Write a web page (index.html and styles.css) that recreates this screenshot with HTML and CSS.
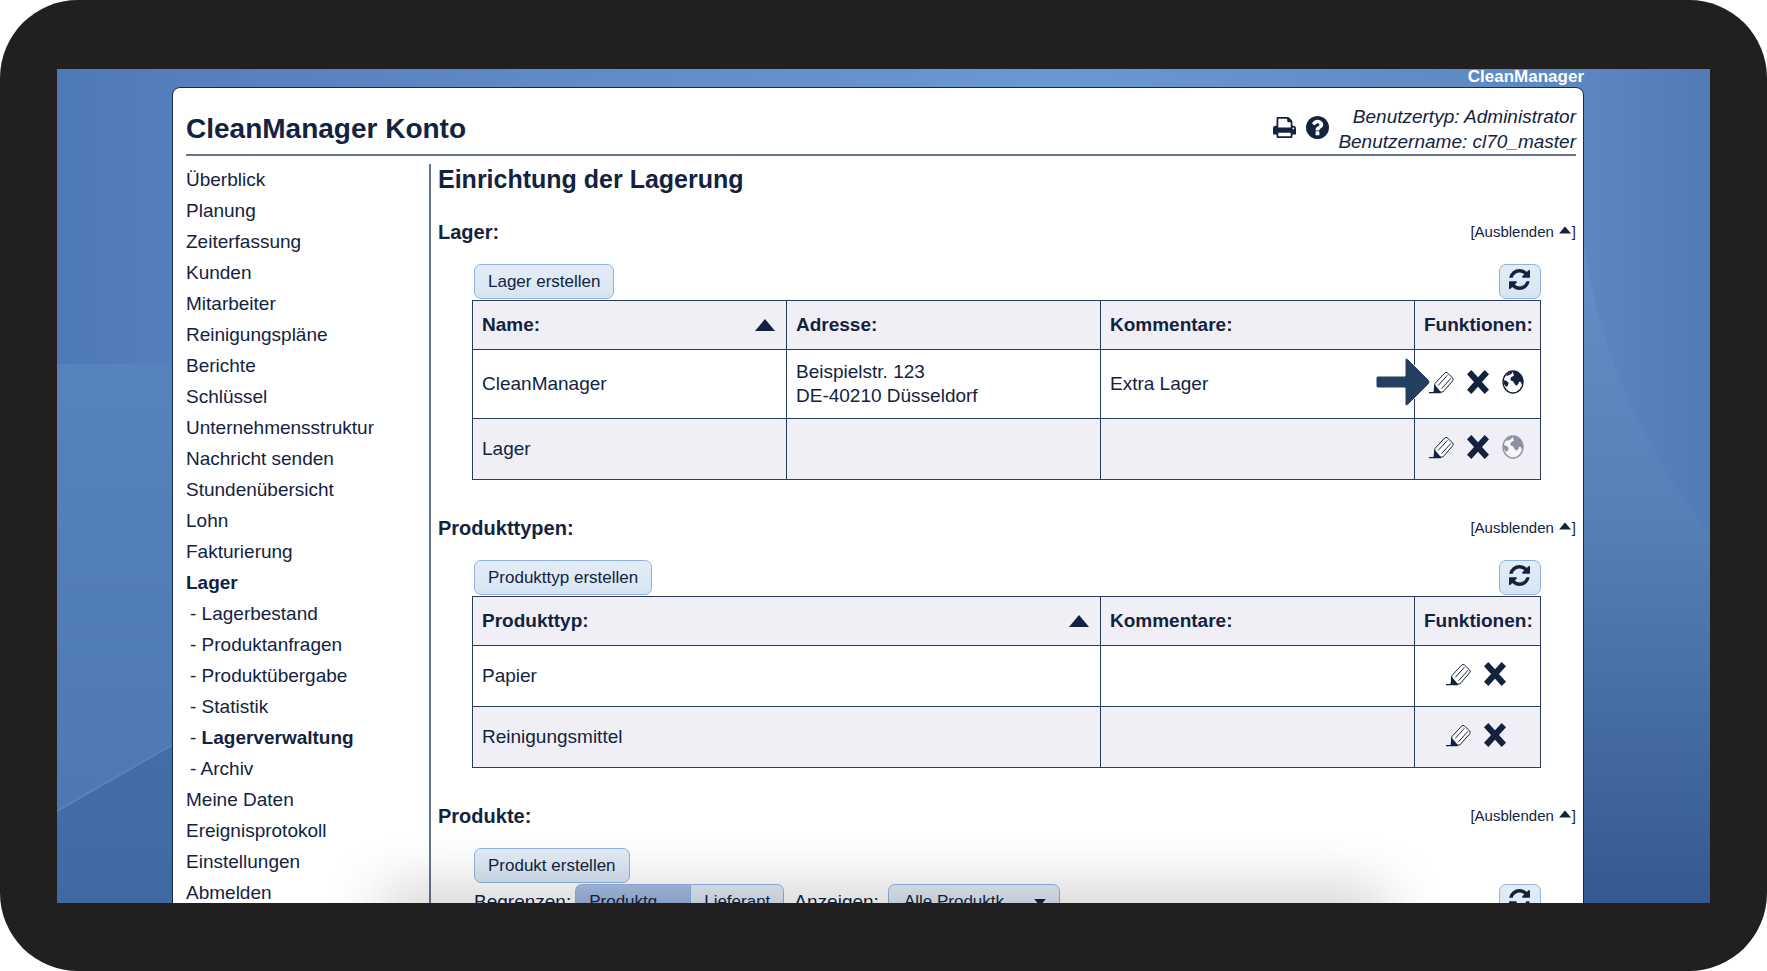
FILE: index.html
```
<!DOCTYPE html>
<html lang="de">
<head>
    <meta charset="UTF-8">
    <meta name="viewport" content="width=device-width, initial-scale=1.0">
    <title>CleanManager Konto</title>
    <link rel="stylesheet" href="styles.css">
</head>
<body>
    <!-- Symbole -->
    <svg class="symbols" aria-hidden="true">
        <symbol id="print" viewBox="64 128 1664 1536">
            <path d="M448 1536h896v-256h-896v256zM448 896h896v-384h-160q-40 0-68-28t-28-68v-160h-640v640zM1600 960q0-26-19-45t-45-19-45 19-19 45 19 45 45 19 45-19 19-45zM1728 960v416q0 13-9.500 22.500t-22.500 9.500h-224v160q0 40-28 68t-68 28h-960q-40 0-68-28t-28-68v-160h-224q-13 0-22.500-9.500t-9.500-22.500v-416q0-79 56.500-135.500t135.500-56.500h64v-544q0-40 28-68t68-28h672q40 0 88 20t76 48l152 152q28 28 48 76t20 88v256h64q79 0 135.500 56.500t56.500 135.500z"/>
        </symbol>
        <symbol id="help" viewBox="128 128 1536 1536">
            <path d="M1024 1376v-192q0-14-9-23t-23-9h-192q-14 0-23 9t-9 23v192q0 14 9 23t23 9h192q14 0 23-9t9-23zM1280 704q0-88-55.500-163t-138.500-116-170-41q-243 0-371 213-15 24 8 42l132 100q7 6 19 6 16 0 25-12 53-68 86-92 34-24 86-24 48 0 85.500 26t37.500 59q0 38-20 61t-68 45q-63 28-115.500 86.500t-52.500 125.500v36q0 14 9 23t23 9h192q14 0 23-9t9-23q0-19 21.500-49.500t54.500-49.500q32-18 49-28.500t46-35 44.500-48 28-60.500 12.500-81zM1664 896q0 209-103 385.500t-279.500 279.500-385.500 103-385.500-103-279.500-279.500-103-385.500 103-385.500 279.500-279.500 385.500-103 385.500 103 279.500 279.500 103 385.500z"/>
        </symbol>
        <symbol id="refresh" viewBox="128 128 1536 1536">
            <path d="M1639 1056q0 5-1 7-64 268-268 434.500t-478 166.500q-146 0-282.500-55t-243.500-157l-129 129q-19 19-45 19t-45-19-19-45v-448q0-26 19-45t45-19h448q26 0 45 19t19 45-19 45l-137 137q71 66 161 102t187 36q134 0 250-65t186-179q11-17 53-117 8-23 30-23h192q13 0 22.500 9.500t9.500 22.500zM1664 256v448q0 26-19 45t-45 19h-448q-26 0-45-19t-19-45 19-45l138-138q-148-137-349-137-134 0-250 65t-186 179q-11 17-53 117-8 23-30 23h-199q-13 0-22.500-9.500t-9.500-22.500v-7q65-268 270-434.500t480-166.500q146 0 284 55.500t245 156.500l130-129q19-19 45-19t45 19 19 45z"/>
        </symbol>
        <symbol id="edit" viewBox="0 0 76 70">
            <path d="M18 38L48 6Q52 2 56 6L72 21Q75 25 72 30L42 64H16Z" fill="#fff" stroke="currentColor" stroke-width="3"/>
            <path d="M28 44L56 13M38 54L67 22" fill="none" stroke="currentColor" stroke-width="3"/>
            <path d="M16 40L36 64V68H0V64H14Z"/>
        </symbol>
        <symbol id="delete" viewBox="0 0 66 72">
            <path d="M13 0L33 22L53 0L66 13L45 36L66 59L53 72L33 50L13 72L0 59L21 36L0 13Z"/>
        </symbol>
        <symbol id="globe" viewBox="0 0 66 72">
            <ellipse cx="33" cy="36" rx="30" ry="33" fill="#fff" stroke="currentColor" stroke-width="4"/>
            <path d="M3 30L13 32L20 39L17 48L12 50Q4 42 3 30ZM13 15Q20 6 32 4L30 10L22 15L14 18ZM32 6Q50 2 60 20L64 34L60 44L56 36L51 35L49 42L43 47L38 42L33 34L25 31L27 22L36 17Z"/>
        </symbol>
        <symbol id="triangle" viewBox="0 0 20 12">
            <path d="M10 0L20 12H0Z"/>
        </symbol>
    </svg>

    <div class="device">
        <div class="screen">
            <svg class="backdrop" viewBox="0 0 1653 834" preserveAspectRatio="none" aria-hidden="true">
                <defs>
                    <linearGradient id="sky">
                        <stop offset="0" stop-color="#4d79b6"/>
                        <stop offset=".07" stop-color="#557fbc"/>
                        <stop offset=".6" stop-color="#6a98d2"/>
                        <stop offset=".92" stop-color="#5c87c1"/>
                        <stop offset="1" stop-color="#517bb5"/>
                    </linearGradient>
                    <linearGradient id="leftGlow" x2="0" y2="1">
                        <stop offset="0" stop-color="#5683bb"/>
                        <stop offset="1" stop-color="#4c76b1"/>
                    </linearGradient>
                    <linearGradient id="leftFloor" x2="0" y2="1">
                        <stop offset="0" stop-color="#4670ae"/>
                        <stop offset="1" stop-color="#4069a4"/>
                    </linearGradient>
                    <linearGradient id="rightGlow" x2="0" y2="1">
                        <stop offset="0" stop-color="#648fc6"/>
                        <stop offset=".4" stop-color="#5680b8"/>
                        <stop offset=".65" stop-color="#4870a9"/>
                        <stop offset="1" stop-color="#34598f"/>
                    </linearGradient>
                </defs>
                <rect width="1653" height="834" fill="url(#sky)"/>
                <rect y="295" width="300" height="539" fill="url(#leftGlow)"/>
                <path d="M0 742L300 570V834H0Z" fill="url(#leftFloor)"/>
                <path d="M0 742L300 570" stroke="#5883bd" stroke-width="2"/>
                <path d="M1400 180H1528Q1548 330 1653 465V834H1400Z" fill="url(#rightGlow)"/>
            </svg>

            <div class="page">
                <div class="brand">CleanManager</div>
                <div class="panel">
                    <header class="header">
                        <h1>CleanManager Konto</h1>
                        <div class="tools">
                            <a href="#" aria-label="Drucken"><svg class="icon-tool"><use href="#print"/></svg></a>
                            <a href="#" aria-label="Hilfe"><svg class="icon-tool"><use href="#help"/></svg></a>
                        </div>
                        <div class="user">Benutzertyp: Administrator<br>Benutzername: cl70_master</div>
                    </header>

                    <div class="body">
                        <nav class="menu">
                            <a href="#">Überblick</a>
                            <a href="#">Planung</a>
                            <a href="#">Zeiterfassung</a>
                            <a href="#">Kunden</a>
                            <a href="#">Mitarbeiter</a>
                            <a href="#">Reinigungspläne</a>
                            <a href="#">Berichte</a>
                            <a href="#">Schlüssel</a>
                            <a href="#">Unternehmensstruktur</a>
                            <a href="#">Nachricht senden</a>
                            <a href="#">Stundenübersicht</a>
                            <a href="#">Lohn</a>
                            <a href="#">Fakturierung</a>
                            <a href="#" class="active">Lager</a>
                            <div class="submenu">
                                <div>- <a href="#">Lagerbestand</a></div>
                                <div>- <a href="#">Produktanfragen</a></div>
                                <div>- <a href="#">Produktübergabe</a></div>
                                <div>- <a href="#">Statistik</a></div>
                                <div>- <a href="#" class="active">Lagerverwaltung</a></div>
                                <div>- <a href="#">Archiv</a></div>
                            </div>
                            <a href="#">Meine Daten</a>
                            <a href="#">Ereignisprotokoll</a>
                            <a href="#">Einstellungen</a>
                            <a href="#">Abmelden</a>
                        </nav>

                        <main class="content">
                            <h2>Einrichtung der Lagerung</h2>

                            <section class="section">
                                <div class="section-head">
                                    <h3>Lager:</h3>
                                    <a href="#" class="toggle">[Ausblenden <svg class="icon-up"><use href="#triangle"/></svg>]</a>
                                </div>
                                <div class="section-body">
                                    <div class="toolbar">
                                        <button type="button" class="btn">Lager erstellen</button>
                                        <button type="button" class="btn refresh" aria-label="Aktualisieren"><svg class="icon-refresh"><use href="#refresh"/></svg></button>
                                    </div>
                                    <table>
                                        <thead>
                                            <tr>
                                                <th class="col"><div class="sort">Name: <svg class="icon-sort"><use href="#triangle"/></svg></div></th>
                                                <th class="col">Adresse:</th>
                                                <th>Kommentare:</th>
                                                <th class="col-functions">Funktionen:</th>
                                            </tr>
                                        </thead>
                                        <tbody>
                                            <tr class="tall">
                                                <td>CleanManager</td>
                                                <td>Beispielstr. 123<br>DE-40210 Düsseldorf</td>
                                                <td>Extra Lager</td>
                                                <td class="marked">
                                                    <div class="functions">
                                                        <a href="#" aria-label="Bearbeiten"><svg class="icon-edit"><use href="#edit"/></svg></a>
                                                        <a href="#" aria-label="Löschen"><svg class="icon"><use href="#delete"/></svg></a>
                                                        <a href="#" aria-label="Karte"><svg class="icon"><use href="#globe"/></svg></a>
                                                    </div>
                                                    <svg class="pointer" viewBox="0 0 58 52" aria-hidden="true">
                                                        <path d="M4 20H31V4Q31 1 34 3L55 24Q57 26 55 28L34 49Q31 51 31 48V32H4Q2 32 2 30V22Q2 20 4 20Z" fill="#243f61" stroke="#fff" stroke-width="1"/>
                                                    </svg>
                                                </td>
                                            </tr>
                                            <tr>
                                                <td>Lager</td>
                                                <td></td>
                                                <td></td>
                                                <td>
                                                    <div class="functions">
                                                        <a href="#" aria-label="Bearbeiten"><svg class="icon-edit"><use href="#edit"/></svg></a>
                                                        <a href="#" aria-label="Löschen"><svg class="icon"><use href="#delete"/></svg></a>
                                                        <a href="#" aria-label="Karte" class="disabled"><svg class="icon"><use href="#globe"/></svg></a>
                                                    </div>
                                                </td>
                                            </tr>
                                        </tbody>
                                    </table>
                                </div>
                            </section>

                            <section class="section">
                                <div class="section-head">
                                    <h3>Produkttypen:</h3>
                                    <a href="#" class="toggle">[Ausblenden <svg class="icon-up"><use href="#triangle"/></svg>]</a>
                                </div>
                                <div class="section-body">
                                    <div class="toolbar">
                                        <button type="button" class="btn">Produkttyp erstellen</button>
                                        <button type="button" class="btn refresh" aria-label="Aktualisieren"><svg class="icon-refresh"><use href="#refresh"/></svg></button>
                                    </div>
                                    <table>
                                        <thead>
                                            <tr>
                                                <th><div class="sort">Produkttyp: <svg class="icon-sort"><use href="#triangle"/></svg></div></th>
                                                <th class="col">Kommentare:</th>
                                                <th class="col-functions">Funktionen:</th>
                                            </tr>
                                        </thead>
                                        <tbody>
                                            <tr>
                                                <td>Papier</td>
                                                <td></td>
                                                <td>
                                                    <div class="functions">
                                                        <a href="#" aria-label="Bearbeiten"><svg class="icon-edit"><use href="#edit"/></svg></a>
                                                        <a href="#" aria-label="Löschen"><svg class="icon"><use href="#delete"/></svg></a>
                                                    </div>
                                                </td>
                                            </tr>
                                            <tr>
                                                <td>Reinigungsmittel</td>
                                                <td></td>
                                                <td>
                                                    <div class="functions">
                                                        <a href="#" aria-label="Bearbeiten"><svg class="icon-edit"><use href="#edit"/></svg></a>
                                                        <a href="#" aria-label="Löschen"><svg class="icon"><use href="#delete"/></svg></a>
                                                    </div>
                                                </td>
                                            </tr>
                                        </tbody>
                                    </table>
                                </div>
                            </section>

                            <section class="section">
                                <div class="section-head">
                                    <h3>Produkte:</h3>
                                    <a href="#" class="toggle">[Ausblenden <svg class="icon-up"><use href="#triangle"/></svg>]</a>
                                </div>
                                <div class="section-body">
                                    <div class="toolbar">
                                        <button type="button" class="btn">Produkt erstellen</button>
                                    </div>
                                    <div class="toolbar">
                                        <div class="filters">
                                            <span>Begrenzen:</span>
                                            <div class="tabs">
                                                <button type="button" class="btn selected">Produktg</button>
                                                <button type="button" class="btn">Lieferant</button>
                                            </div>
                                            <label for="show">Anzeigen:</label>
                                            <div class="dropdown">
                                                <select id="show" class="btn">
                                                    <option>Alle Produktk</option>
                                                </select>
                                                <svg class="icon-down"><use href="#triangle"/></svg>
                                            </div>
                                        </div>
                                        <button type="button" class="btn refresh" aria-label="Aktualisieren"><svg class="icon-refresh"><use href="#refresh"/></svg></button>
                                    </div>
                                </div>
                            </section>
                        </main>
                    </div>
                </div>
            </div>

            <div class="shade"></div>
        </div>
    </div>
</body>
</html>
```

FILE: styles.css
```
* {
    box-sizing: border-box;
}

body {
    margin: 0;
    background-color: #fff;
    color: #13233f;
    font-family: "Liberation Sans", Arial, sans-serif;
    font-size: 19px;
    line-height: 24px;
}

h1,
h2,
h3 {
    margin: 0;
}

a {
    color: inherit;
    text-decoration: none;
}

svg {
    display: block;
    fill: currentColor;
}

.symbols {
    display: none;
}

/* Rahmen des Geräts */
.device {
    display: flex;
    height: 100vh;
    padding: 69px 57px 68px;
    background-color: #221f20;
    border-radius: 78px;
}

.screen {
    position: relative;
    flex: 1;
    overflow: hidden;
}

.backdrop {
    position: absolute;
    width: 100%;
    height: 100%;
}

.shade {
    position: absolute;
    top: 100%;
    left: 20%;
    right: 20%;
    height: 20px;
    box-shadow: 0 0 60px 6px rgba(0, 0, 0, 0.3);
    pointer-events: none;
}

/* Seite */
.page {
    position: relative;
    margin: 0 126px 0 115px;
}

.brand {
    padding-bottom: 2px;
    color: #fff;
    font-size: 17px;
    font-weight: bold;
    line-height: 16px;
    text-align: right;
}

.panel {
    padding: 0 7px 30px 13px;
    background-color: #fff;
    border: 1px solid #152a52;
    border-radius: 8px;
}

.header {
    display: flex;
    align-items: flex-end;
    height: 68px;
    border-bottom: 2px solid #66748c;
}

.header h1 {
    flex: 1;
    padding-bottom: 8px;
    font-size: 28px;
    line-height: 34px;
}

.tools {
    display: flex;
    gap: 10px;
    padding: 0 9px 15px 0;
}

.icon-tool {
    width: 23px;
    height: 23px;
}

.user {
    font-style: italic;
    line-height: 25px;
    text-align: right;
}

.body {
    display: flex;
    padding-top: 8px;
}

/* Menü */
.menu {
    width: 243px;
    line-height: 31px;
}

.menu > a {
    display: block;
}

.submenu {
    padding-left: 4px;
}

.active {
    font-weight: bold;
}

/* Inhalt */
.content {
    flex: 1;
    padding-left: 7px;
    border-left: 2px solid #66748c;
}

.content h2 {
    font-size: 25px;
    line-height: 31px;
}

.section {
    padding-top: 22px;
    padding-bottom: 11px;
}

.section-head {
    display: flex;
    align-items: center;
    justify-content: space-between;
    height: 30px;
}

.section-head h3 {
    font-size: 20px;
}

.toggle {
    display: flex;
    gap: 5px;
    font-size: 15px;
}

.icon-up {
    width: 12px;
    height: 8px;
    margin-top: 6px;
}

.toggle .icon-up {
    margin-right: -4px;
}

.section-body {
    padding: 17px 35px 0 34px;
}

.toolbar {
    display: flex;
    justify-content: space-between;
    padding: 0 0 1px 2px;
}

/* Schaltflächen */
.btn {
    height: 35px;
    padding: 0 13px;
    border: 1px solid #92b2e0;
    border-radius: 7px;
    background: linear-gradient(#e4edf7, #d6e4f2);
    color: inherit;
    font: 17px "Liberation Sans", Arial, sans-serif;
    cursor: pointer;
}

.refresh {
    width: 42px;
    padding: 0 9px 4px;
}

.icon-refresh {
    width: 21px;
    height: 21px;
}

.filters {
    display: flex;
    align-items: center;
    gap: 4px;
}

.tabs {
    display: flex;
    margin-right: 6px;
}

.tabs .btn {
    border-radius: 0 7px 7px 0;
}

.tabs .selected {
    width: 115px;
    border-right: 0;
    border-radius: 7px 0 0 7px;
    background: linear-gradient(#a9c1e6, #8fabd8);
    text-align: left;
}

.dropdown {
    position: relative;
    margin-left: 5px;
}

.dropdown select {
    width: 172px;
    padding-left: 15px;
    appearance: none;
}

.icon-down {
    position: absolute;
    top: 15px;
    right: 14px;
    width: 12px;
    height: 7px;
    transform: rotate(180deg);
    pointer-events: none;
}

/* Tabellen */
table {
    width: 100%;
    table-layout: fixed;
    border-collapse: collapse;
}

th,
td {
    height: 61px;
    padding: 0 9px;
    border: 1px solid #2c3d5c;
    text-align: left;
}

th {
    height: 49px;
    background-color: #f0eff6;
}

tbody tr:nth-child(even) {
    background-color: #f0eff6;
}

.tall td {
    height: 69px;
}

.col {
    width: 314px;
}

.col-functions {
    width: 126px;
    padding-right: 0;
}

.sort {
    display: flex;
    align-items: center;
    justify-content: space-between;
    padding-right: 2px;
}

.icon-sort {
    width: 20px;
    height: 12px;
}

.functions {
    display: flex;
    align-items: center;
    justify-content: center;
    gap: 13px;
    padding: 0 3px 4px 0;
}

.icon-edit {
    width: 25px;
    height: 23px;
}

.icon {
    width: 22px;
    height: 24px;
}

.disabled {
    opacity: 0.45;
}

.marked {
    position: relative;
}

/* Hinweispfeil über der Tabelle */
.pointer {
    position: absolute;
    top: 6px;
    left: -41px;
    width: 58px;
    height: 52px;
}
```
